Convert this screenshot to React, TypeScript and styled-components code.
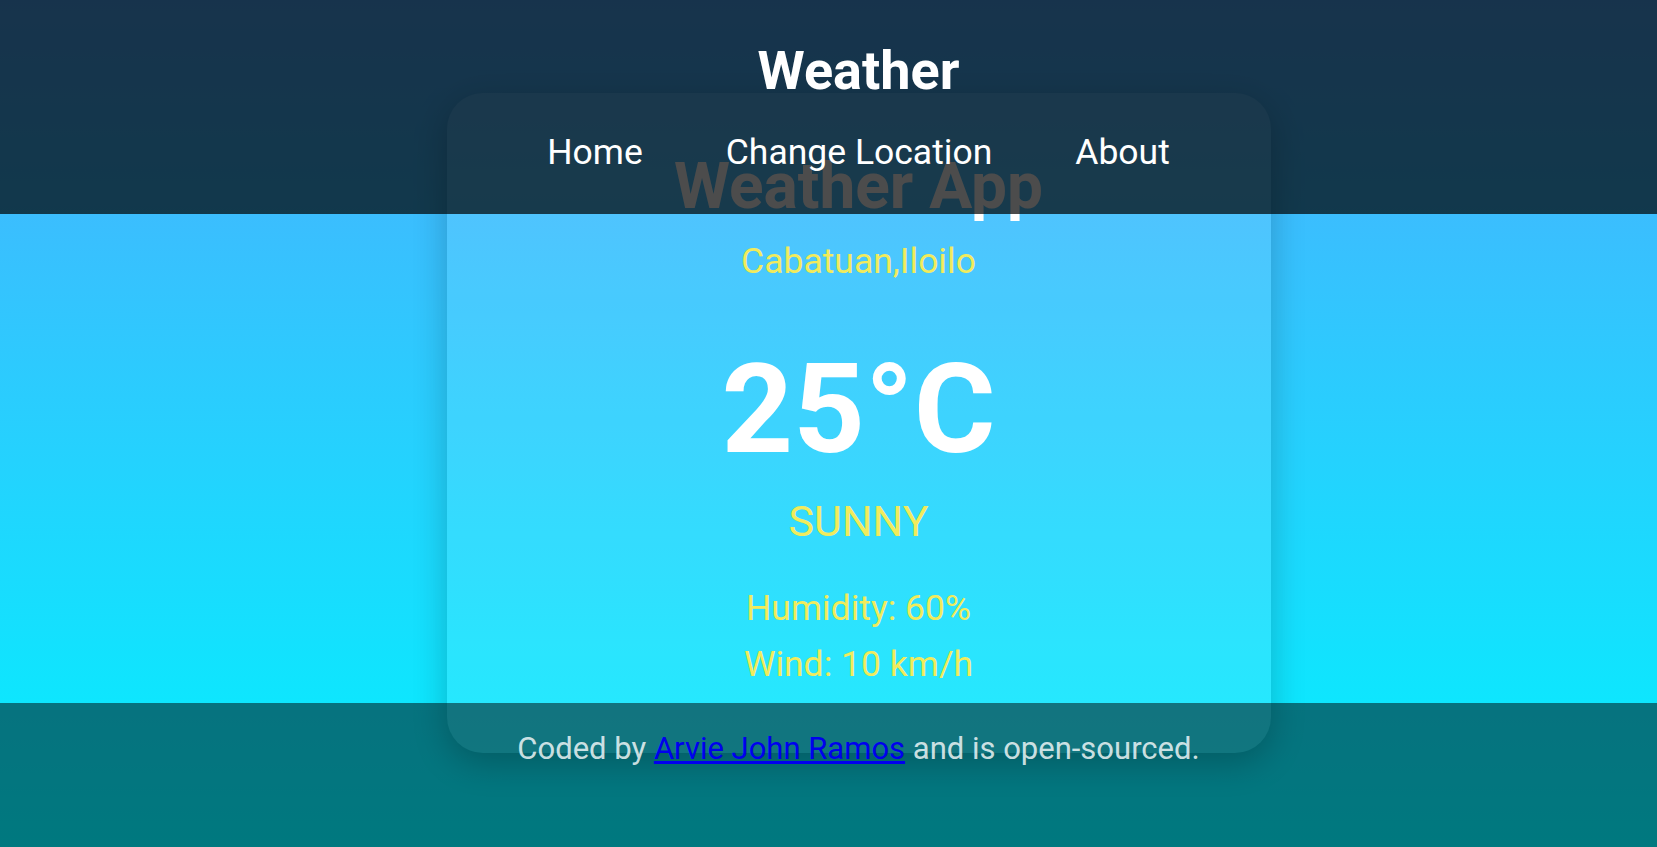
import React from "react";
import styled, { createGlobalStyle } from "styled-components";

const GlobalStyle = createGlobalStyle`
  html, body {
    margin: 0;
    padding: 0;
    height: 100%;
  }
  body {
    font-family: Roboto, "Noto Sans", "Liberation Sans", sans-serif;
    background: linear-gradient(to bottom, #4facfe 0%, #00f2fe 100%);
    min-height: 847px;
    overflow: hidden;
  }
  * { box-sizing: border-box; }
`;

const Page = styled.div`
  display: grid;
  grid-template-columns: 1fr;
  grid-template-rows: 214px 1fr 144px;
  height: 847px;
  background: linear-gradient(to bottom, #4facfe 0%, #00f2fe 100%);
`;

const Header = styled.header`
  grid-row: 1;
  grid-column: 1;
  z-index: 2;
  background: rgba(0, 0, 0, 0.7);
  display: flex;
  flex-direction: column;
  align-items: center;
  padding: 39px 0 0 60px;
`;

const Brand = styled.div`
  color: #ffffff;
  font-size: 54px;
  font-weight: 700;
  line-height: 64px;
`;

const Nav = styled.nav`
  display: flex;
  gap: 83px;
  margin-top: 29px;
`;

const NavLink = styled.a`
  color: #ffffff;
  font-size: 35.5px;
  line-height: 40px;
  text-decoration: none;
`;

const Card = styled.main`
  grid-row: 1 / 4;
  grid-column: 1;
  z-index: 1;
  align-self: start;
  justify-self: center;
  margin: 93px 0 0 60px;
  width: 824px;
  height: 660px;
  border-radius: 36px;
  background: rgba(255, 255, 255, 0.1);
  box-shadow: 0 10px 34px rgba(0, 0, 0, 0.22);
  display: flex;
  flex-direction: column;
  align-items: center;
  padding-top: 56px;
  text-align: center;
`;

const Title = styled.h1`
  margin: 0;
  color: #ffffff;
  font-size: 64px;
  font-weight: 700;
  line-height: 76px;
`;

const Detail = styled.p<{ $size?: number; $lh?: number; $mt?: number }>`
  margin: ${(p) => p.$mt ?? 0}px 0 0;
  color: #f1eb5c;
  font-size: ${(p) => p.$size ?? 35.5}px;
  line-height: ${(p) => p.$lh ?? 40}px;
`;

const Temp = styled.div`
  margin-top: 66px;
  color: #ffffff;
  font-size: 125px;
  font-weight: 700;
  line-height: 125px;
`;

const Footer = styled.footer`
  grid-row: 3;
  grid-column: 1;
  z-index: 2;
  background: rgba(0, 0, 0, 0.5);
  display: flex;
  justify-content: center;
  padding: 28px 0 0 60px;
  color: rgba(255, 255, 255, 0.8);
  font-size: 31px;
  line-height: 36px;
`;

const Credit = styled.p`
  margin: 0;
`;

const AuthorLink = styled.a`
  color: #0000ee;
  text-decoration: underline;
`;

export default function App() {
  return (
    <>
      <GlobalStyle />
      <Page>
        <Header>
          <Brand>Weather</Brand>
          <Nav>
            <NavLink href="#">Home</NavLink>
            <NavLink href="#">Change Location</NavLink>
            <NavLink href="#">About</NavLink>
          </Nav>
        </Header>
        <Card>
          <Title>Weather App</Title>
          <Detail $mt={16}>Cabatuan,Iloilo</Detail>
          <Temp>25°C</Temp>
          <Detail $size={43} $lh={48} $mt={25}>SUNNY</Detail>
          <Detail $lh={56} $mt={35}>Humidity: 60%</Detail>
          <Detail $lh={56}>Wind: 10 km/h</Detail>
        </Card>
        <Footer>
          <Credit>
            Coded by <AuthorLink href="#">Arvie John Ramos</AuthorLink> and is open-sourced.
          </Credit>
        </Footer>
      </Page>
    </>
  );
}
